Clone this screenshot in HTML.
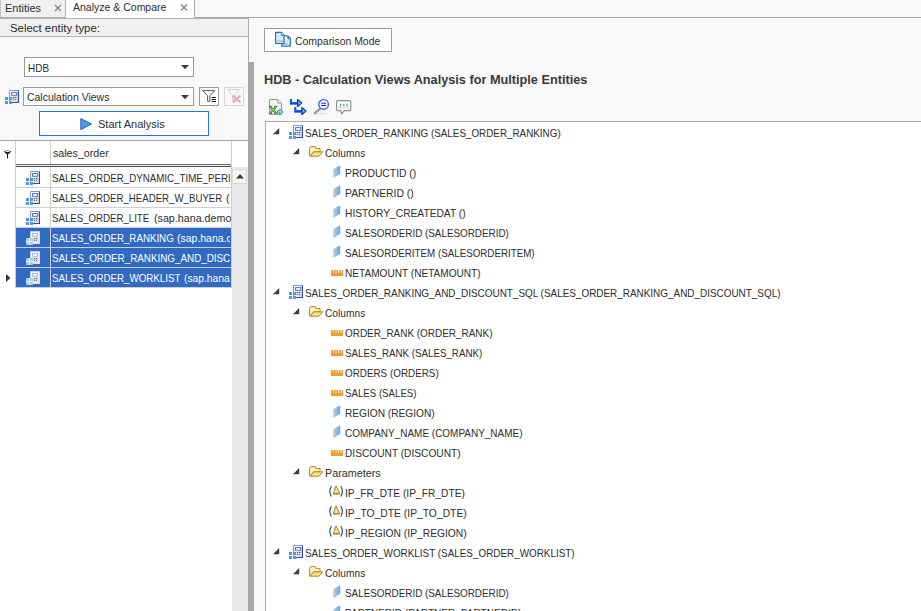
<!DOCTYPE html>
<html>
<head>
<meta charset="utf-8">
<title>Analyze &amp; Compare</title>
<style>
html,body{margin:0;padding:0;}
body{width:921px;height:611px;overflow:hidden;background:#f8f8f8;font-family:"Liberation Sans","DejaVu Sans",sans-serif;font-size:11px;color:#2d2d2d;position:relative;}
.abs{position:absolute;}
.t{position:absolute;white-space:nowrap;transform-origin:0 0;}
.clip{position:absolute;overflow:hidden;}
.combo{background:#fff;border:1px solid #999;box-sizing:border-box;}
.btn{background:#fff;border:1px solid #9a9a9a;box-sizing:border-box;}
.hl{position:absolute;height:1px;}
.vl{position:absolute;width:1px;}
</style>
</head>
<body>

<div class="abs" style="left:0;top:0;width:921px;height:17px;background:#f8f8f8;"></div>
<div class="abs" style="left:0;top:0;width:65px;height:17px;background:#f0f0f0;"></div>
<div class="vl" style="left:0;top:0;height:17px;background:#c4c4c4;"></div>
<div class="vl" style="left:65px;top:0;height:17px;background:#b4b4b4;"></div>
<div class="abs" style="left:66px;top:0;width:128px;height:18px;background:#fff;"></div>
<div class="vl" style="left:194px;top:0;height:18px;background:#b0b0b0;"></div>
<div class="hl" style="left:0;top:17px;width:66px;background:#ababab;"></div>
<div class="hl" style="left:195px;top:17px;width:726px;background:#ababab;"></div>
<svg class="abs" style="left:54px;top:4px" width="8" height="8" viewBox="0 0 8 8"><path transform="translate(0.5,0.5)" d="M0.5 0.5L6.5 6.5M6.5 0.5L0.5 6.5" stroke="#7a7a7a" stroke-width="1.1" fill="none"/></svg>
<svg class="abs" style="left:180px;top:4px" width="8" height="8" viewBox="0 0 8 8"><path transform="translate(0.5,0)" d="M0.5 0.5L6.5 6.5M6.5 0.5L0.5 6.5" stroke="#7a7a7a" stroke-width="1.1" fill="none"/></svg>
<div class="abs" style="left:0;top:18px;width:248px;height:593px;background:#f8f8f8;"></div>
<div class="abs" style="left:0;top:18px;width:248px;height:18px;background:#f0f0f0;"></div>
<div class="hl" style="left:0;top:18px;width:248px;background:#b2b2b2;"></div>
<div class="hl" style="left:0;top:36px;width:248px;background:#b4b4b4;"></div>
<div class="vl" style="left:248px;top:18px;height:44px;background:#ababab;"></div>
<div class="abs" style="left:248px;top:62px;width:6px;height:549px;background:#a8a8a8;"></div>
<div class="abs combo" style="left:24px;top:57px;width:170px;height:20px;"></div>
<svg class="abs" style="left:181px;top:65px" width="8" height="5" viewBox="0 0 8 5"><path d="M0 0H8L4 4.2Z" fill="#3a3a3a"/></svg>
<div class="abs combo" style="left:23px;top:87px;width:171px;height:19px;"></div>
<svg class="abs" style="left:181px;top:95px" width="8" height="5" viewBox="0 0 8 5"><path d="M0 0H8L4 4.2Z" fill="#3a3a3a"/></svg>
<svg class="abs" style="left:5px;top:90px" width="15" height="15" viewBox="0 0 15 15"><rect x="4.5" y="0.5" width="9" height="12" fill="#e3ecf9"/><rect x="5" y="1" width="8" height="5.5" fill="#fbfcff"/><path d="M4.5 13V0.5H13.5" fill="none" stroke="#7f98d2" stroke-width="1"/><path d="M13.4 0.4V12.5H5" fill="none" stroke="#2d4d9e" stroke-width="1.2"/><rect x="6.5" y="2.6" width="5.2" height="2.7" fill="#ffffff" stroke="#4f70c2" stroke-width="1"/><rect x="7.8" y="6.8" width="1.4" height="1.4" fill="#1fa038"/><rect x="9.9" y="6.8" width="1.4" height="1.4" fill="#e02020"/><rect x="7.8" y="8.9" width="1.3" height="1.3" fill="#777c86"/><rect x="9.9" y="8.9" width="1.3" height="1.3" fill="#777c86"/><path d="M7 8.4L8 9.2M9.4 10.4L10 11M9.2 8.4L9.8 9M11.4 8.4L12.2 9.2M12 10.2L11.4 10.8" stroke="#c9c4bb" stroke-width="0.7"/><rect x="0" y="7" width="3" height="3" fill="#4f9ad8"/><rect x="4" y="7" width="3" height="3" fill="#4f9ad8"/><rect x="0" y="11" width="3" height="3" fill="#4f9ad8"/><rect x="4" y="11" width="3" height="3" fill="#4f9ad8"/></svg>
<div class="abs btn" style="left:199px;top:87px;width:20px;height:19px;"></div>
<svg class="abs" style="left:202px;top:90px" width="15" height="13" viewBox="0 0 15 13"><path d="M0.6 0.6H12.6L7.8 5.8V11.4H5.6V5.8Z" fill="#fff" stroke="#444" stroke-width="0.9"/><path d="M9.5 7.5H14M9.5 9.5H14M9.5 11.5H14" stroke="#222" stroke-width="1"/></svg>
<div class="abs btn" style="left:224px;top:87px;width:20px;height:19px;border-color:#d6d6d6;background:#f9f9f9;"></div>
<svg class="abs" style="left:227px;top:89px" width="15" height="15" viewBox="0 0 15 15"><path d="M0.6 0.6H12.6L7 6.4V11.4H5.6V6.4Z" fill="#fbfbfb" stroke="#d0d0d0" stroke-width="1"/><path d="M6 6.5L13.5 13.5M13.5 6.5L6 13.5" stroke="#eba3ab" stroke-width="2"/></svg>
<div class="abs" style="left:39px;top:111px;width:170px;height:25px;background:#fff;border:1px solid #1c78d4;box-sizing:border-box;"></div>
<svg class="abs" style="left:80px;top:118px" width="13" height="13" viewBox="0 0 13 13"><path d="M0.8 0.6L11.6 6L0.8 11.6Z" fill="#4a98ee" stroke="#1f66cc" stroke-width="1" stroke-linejoin="round"/></svg>
<div class="abs" style="left:0;top:140px;width:248px;height:471px;background:#fff;"></div>
<div class="hl" style="left:0;top:140px;width:248px;background:#a6a6a6;"></div>
<div class="abs" style="left:232px;top:167px;width:16px;height:444px;background:#e9e9e9;"></div>
<div class="abs" style="left:232px;top:169px;width:15px;height:15px;background:#f4f4f4;border:1px solid #d9d9d9;box-sizing:border-box;"></div>
<svg class="abs" style="left:236px;top:174px" width="8" height="5" viewBox="0 0 8 5"><path d="M0 4.4H8L4 0Z" fill="#3a3a3a"/></svg>
<div class="abs" style="left:16px;top:228px;width:215px;height:20px;background:#316ac5;"></div>
<div class="abs" style="left:16px;top:248px;width:215px;height:20px;background:#316ac5;"></div>
<div class="abs" style="left:16px;top:268px;width:215px;height:20px;background:#316ac5;"></div>
<div class="vl" style="left:15px;top:141px;height:147px;background:#cdcdcd;"></div>
<div class="vl" style="left:50px;top:141px;height:147px;background:#cdcdcd;"></div>
<div class="vl" style="left:231px;top:141px;height:147px;background:#cdcdcd;"></div>
<div class="hl" style="left:16px;top:187px;width:216px;background:#cfcfcf;"></div>
<div class="hl" style="left:16px;top:207px;width:216px;background:#cfcfcf;"></div>
<div class="hl" style="left:16px;top:227px;width:216px;background:#cfcfcf;"></div>
<div class="hl" style="left:16px;top:247px;width:216px;background:#cfcfcf;"></div>
<div class="hl" style="left:16px;top:267px;width:216px;background:#cfcfcf;"></div>
<div class="hl" style="left:16px;top:287px;width:216px;background:#cfcfcf;"></div>
<div class="hl" style="left:16px;top:164px;width:215px;background:#6a6a6a;"></div>
<div class="hl" style="left:16px;top:165px;width:215px;background:#f0f0f0;"></div>
<div class="hl" style="left:16px;top:166px;width:215px;background:#4a4a4a;"></div>
<svg class="abs" style="left:26px;top:171px" width="15" height="15" viewBox="0 0 15 15"><rect x="4.5" y="0.5" width="9" height="12" fill="#e3ecf9"/><rect x="5" y="1" width="8" height="5.5" fill="#fbfcff"/><path d="M4.5 13V0.5H13.5" fill="none" stroke="#7f98d2" stroke-width="1"/><path d="M13.4 0.4V12.5H5" fill="none" stroke="#2d4d9e" stroke-width="1.2"/><rect x="6.5" y="2.6" width="5.2" height="2.7" fill="#ffffff" stroke="#4f70c2" stroke-width="1"/><rect x="7.8" y="6.8" width="1.4" height="1.4" fill="#1fa038"/><rect x="9.9" y="6.8" width="1.4" height="1.4" fill="#e02020"/><rect x="7.8" y="8.9" width="1.3" height="1.3" fill="#777c86"/><rect x="9.9" y="8.9" width="1.3" height="1.3" fill="#777c86"/><path d="M7 8.4L8 9.2M9.4 10.4L10 11M9.2 8.4L9.8 9M11.4 8.4L12.2 9.2M12 10.2L11.4 10.8" stroke="#c9c4bb" stroke-width="0.7"/><rect x="0" y="7" width="3" height="3" fill="#4f9ad8"/><rect x="4" y="7" width="3" height="3" fill="#4f9ad8"/><rect x="0" y="11" width="3" height="3" fill="#4f9ad8"/><rect x="4" y="11" width="3" height="3" fill="#4f9ad8"/></svg>
<svg class="abs" style="left:26px;top:191px" width="15" height="15" viewBox="0 0 15 15"><rect x="4.5" y="0.5" width="9" height="12" fill="#e3ecf9"/><rect x="5" y="1" width="8" height="5.5" fill="#fbfcff"/><path d="M4.5 13V0.5H13.5" fill="none" stroke="#7f98d2" stroke-width="1"/><path d="M13.4 0.4V12.5H5" fill="none" stroke="#2d4d9e" stroke-width="1.2"/><rect x="6.5" y="2.6" width="5.2" height="2.7" fill="#ffffff" stroke="#4f70c2" stroke-width="1"/><rect x="7.8" y="6.8" width="1.4" height="1.4" fill="#1fa038"/><rect x="9.9" y="6.8" width="1.4" height="1.4" fill="#e02020"/><rect x="7.8" y="8.9" width="1.3" height="1.3" fill="#777c86"/><rect x="9.9" y="8.9" width="1.3" height="1.3" fill="#777c86"/><path d="M7 8.4L8 9.2M9.4 10.4L10 11M9.2 8.4L9.8 9M11.4 8.4L12.2 9.2M12 10.2L11.4 10.8" stroke="#c9c4bb" stroke-width="0.7"/><rect x="0" y="7" width="3" height="3" fill="#4f9ad8"/><rect x="4" y="7" width="3" height="3" fill="#4f9ad8"/><rect x="0" y="11" width="3" height="3" fill="#4f9ad8"/><rect x="4" y="11" width="3" height="3" fill="#4f9ad8"/></svg>
<svg class="abs" style="left:26px;top:211px" width="15" height="15" viewBox="0 0 15 15"><rect x="4.5" y="0.5" width="9" height="12" fill="#e3ecf9"/><rect x="5" y="1" width="8" height="5.5" fill="#fbfcff"/><path d="M4.5 13V0.5H13.5" fill="none" stroke="#7f98d2" stroke-width="1"/><path d="M13.4 0.4V12.5H5" fill="none" stroke="#2d4d9e" stroke-width="1.2"/><rect x="6.5" y="2.6" width="5.2" height="2.7" fill="#ffffff" stroke="#4f70c2" stroke-width="1"/><rect x="7.8" y="6.8" width="1.4" height="1.4" fill="#1fa038"/><rect x="9.9" y="6.8" width="1.4" height="1.4" fill="#e02020"/><rect x="7.8" y="8.9" width="1.3" height="1.3" fill="#777c86"/><rect x="9.9" y="8.9" width="1.3" height="1.3" fill="#777c86"/><path d="M7 8.4L8 9.2M9.4 10.4L10 11M9.2 8.4L9.8 9M11.4 8.4L12.2 9.2M12 10.2L11.4 10.8" stroke="#c9c4bb" stroke-width="0.7"/><rect x="0" y="7" width="3" height="3" fill="#4f9ad8"/><rect x="4" y="7" width="3" height="3" fill="#4f9ad8"/><rect x="0" y="11" width="3" height="3" fill="#4f9ad8"/><rect x="4" y="11" width="3" height="3" fill="#4f9ad8"/></svg>
<svg class="abs" style="left:26px;top:231px" width="15" height="15" viewBox="0 0 15 15"><rect x="4.5" y="0.5" width="9" height="12" fill="#edf3fc"/><rect x="5" y="1" width="8" height="5.5" fill="#fbfcff"/><path d="M4.5 13V0.5H13.5" fill="none" stroke="#c3d3f0" stroke-width="1"/><path d="M13.4 0.4V12.5H5" fill="none" stroke="#d9e4f7" stroke-width="1.2"/><rect x="6.5" y="2.6" width="5.2" height="2.7" fill="#ffffff" stroke="#9db8ea" stroke-width="1"/><rect x="7.8" y="6.8" width="1.4" height="1.4" fill="#1fa038"/><rect x="9.9" y="6.8" width="1.4" height="1.4" fill="#e02020"/><rect x="7.8" y="8.9" width="1.3" height="1.3" fill="#777c86"/><rect x="9.9" y="8.9" width="1.3" height="1.3" fill="#777c86"/><path d="M7 8.4L8 9.2M9.4 10.4L10 11M9.2 8.4L9.8 9M11.4 8.4L12.2 9.2M12 10.2L11.4 10.8" stroke="#c9c4bb" stroke-width="0.7"/><rect x="0" y="7" width="7" height="7" fill="#9ccbec"/><rect x="3" y="7" width="1" height="7" fill="#fff"/><rect x="0" y="10" width="7" height="1" fill="#fff"/></svg>
<svg class="abs" style="left:26px;top:251px" width="15" height="15" viewBox="0 0 15 15"><rect x="4.5" y="0.5" width="9" height="12" fill="#edf3fc"/><rect x="5" y="1" width="8" height="5.5" fill="#fbfcff"/><path d="M4.5 13V0.5H13.5" fill="none" stroke="#c3d3f0" stroke-width="1"/><path d="M13.4 0.4V12.5H5" fill="none" stroke="#d9e4f7" stroke-width="1.2"/><rect x="6.5" y="2.6" width="5.2" height="2.7" fill="#ffffff" stroke="#9db8ea" stroke-width="1"/><rect x="7.8" y="6.8" width="1.4" height="1.4" fill="#1fa038"/><rect x="9.9" y="6.8" width="1.4" height="1.4" fill="#e02020"/><rect x="7.8" y="8.9" width="1.3" height="1.3" fill="#777c86"/><rect x="9.9" y="8.9" width="1.3" height="1.3" fill="#777c86"/><path d="M7 8.4L8 9.2M9.4 10.4L10 11M9.2 8.4L9.8 9M11.4 8.4L12.2 9.2M12 10.2L11.4 10.8" stroke="#c9c4bb" stroke-width="0.7"/><rect x="0" y="7" width="7" height="7" fill="#9ccbec"/><rect x="3" y="7" width="1" height="7" fill="#fff"/><rect x="0" y="10" width="7" height="1" fill="#fff"/></svg>
<svg class="abs" style="left:26px;top:271px" width="15" height="15" viewBox="0 0 15 15"><rect x="4.5" y="0.5" width="9" height="12" fill="#edf3fc"/><rect x="5" y="1" width="8" height="5.5" fill="#fbfcff"/><path d="M4.5 13V0.5H13.5" fill="none" stroke="#c3d3f0" stroke-width="1"/><path d="M13.4 0.4V12.5H5" fill="none" stroke="#d9e4f7" stroke-width="1.2"/><rect x="6.5" y="2.6" width="5.2" height="2.7" fill="#ffffff" stroke="#9db8ea" stroke-width="1"/><rect x="7.8" y="6.8" width="1.4" height="1.4" fill="#1fa038"/><rect x="9.9" y="6.8" width="1.4" height="1.4" fill="#e02020"/><rect x="7.8" y="8.9" width="1.3" height="1.3" fill="#777c86"/><rect x="9.9" y="8.9" width="1.3" height="1.3" fill="#777c86"/><path d="M7 8.4L8 9.2M9.4 10.4L10 11M9.2 8.4L9.8 9M11.4 8.4L12.2 9.2M12 10.2L11.4 10.8" stroke="#c9c4bb" stroke-width="0.7"/><rect x="0" y="7" width="7" height="7" fill="#9ccbec"/><rect x="3" y="7" width="1" height="7" fill="#fff"/><rect x="0" y="10" width="7" height="1" fill="#fff"/></svg>
<svg class="abs" style="left:3px;top:150px" width="9" height="9" viewBox="0 0 9 9"><path d="M0.6 1.6Q4.5 -0.6 8.4 1.6L5 4.6V8.6H4V4.6Z" fill="#1e1e1e"/><ellipse cx="4.5" cy="1.5" rx="2.6" ry="0.5" fill="#fff"/></svg>
<svg class="abs" style="left:6px;top:274px" width="5" height="8" viewBox="0 0 5 8"><path d="M0 0L4.4 4L0 8Z" fill="#333"/></svg>
<div class="abs btn" style="left:264px;top:28px;width:128px;height:24px;"></div>
<svg class="abs" style="left:274px;top:31px" width="18" height="17" viewBox="0 0 18 17"><path d="M7.8 4.9H13.8L16.2 7.3V15.2H7.8Z" fill="#fff" stroke="#1c76b6" stroke-width="1.3" stroke-linejoin="round"/><rect x="11.4" y="7.6" width="3.2" height="6.4" fill="#d3e8f4"/><rect x="9" y="12" width="5.6" height="2" fill="#a9d2e9"/><path d="M13.2 6.2L15 8" stroke="#1c76b6" stroke-width="1.2"/><path d="M1.6 1.5H7.6L10 3.9V12.3H1.6Z" fill="#fff" stroke="#1c76b6" stroke-width="1.3" stroke-linejoin="round"/><rect x="3" y="3.2" width="5.6" height="7.8" fill="#d6eaf5"/><rect x="3" y="9" width="5.6" height="2" fill="#a6d0e8"/><rect x="6.4" y="2.6" width="2.8" height="2.8" fill="#fff"/><path d="M6.8 3.2L8.8 5" stroke="#1c76b6" stroke-width="1.2"/></svg>
<svg class="abs" style="left:268px;top:98px" width="17" height="18" viewBox="0 0 17 18"><g transform="translate(0.5,0.5)"><path d="M1 1H9.4L13 4.6V16H1Z" fill="#f1f1f1" stroke="#999" stroke-width="1"/><path d="M9.4 1V4.6H13" fill="#fbfbfb" stroke="#999" stroke-width="1"/><path d="M1.6 8.2L7.6 14.6M7.6 8.2L1.6 14.6" stroke="#2f8a1c" stroke-width="2"/><path d="M1.6 8.2L7.6 14.6M7.6 8.2L1.6 14.6" stroke="#9be07c" stroke-width="0.8"/><path d="M0.4 7.9H3.6M5.6 7.9H8.8M0.4 14.8H3.6M5.6 14.8H8.8" stroke="#2f8a1c" stroke-width="1"/><path d="M9 12.2H11.2V10.7L14.5 13.3L11.2 16V14.4H9Z" fill="#8ae8f4" stroke="#1c8db4" stroke-width="0.9" stroke-linejoin="round"/></g></svg>
<svg class="abs" style="left:289px;top:98px" width="19" height="18" viewBox="0 0 19 18"><path d="M2 0.9V5H9.5" fill="none" stroke="#1258ee" stroke-width="2.1"/><path d="M0.9 6.2H9.5" fill="none" stroke="#0a27b8" stroke-width="0.8"/><path d="M8.6 1.6L12.6 5L8.6 8.4Z" fill="#6fd0ff" stroke="#0b3bd4" stroke-width="1.3" stroke-linejoin="round"/><path d="M6.3 8.9V13H13.8" fill="none" stroke="#1258ee" stroke-width="2.1"/><path d="M5.2 14.2H13.8" fill="none" stroke="#0a27b8" stroke-width="0.8"/><path d="M12.9 9.6L16.9 13L12.9 16.4Z" fill="#6fd0ff" stroke="#0b3bd4" stroke-width="1.3" stroke-linejoin="round"/></svg>
<svg class="abs" style="left:313px;top:98px" width="17" height="17" viewBox="0 0 17 17"><ellipse cx="8.5" cy="15.6" rx="6.5" ry="0.8" fill="#e4e4e4"/><path d="M6.8 10.8L2 15.2" stroke="#8f8f8f" stroke-width="2.3" stroke-linecap="round"/><path d="M6.4 11.2L2.4 14.8" stroke="#d8d8d8" stroke-width="0.8" stroke-dasharray="1 1"/><circle cx="10.6" cy="6.4" r="4.8" fill="#f4f6ff" stroke="#4766e4" stroke-width="1.4"/><path d="M8.2 5.3H13M8.2 7.5H13" stroke="#1b2fb0" stroke-width="1.1"/></svg>
<svg class="abs" style="left:336px;top:100px" width="16" height="15" viewBox="0 0 16 15"><path d="M1.4 0.6H13.8Q14.8 0.6 14.8 1.6V9.6Q14.8 10.6 13.8 10.6H8.2L5.6 13.8L4.8 10.6H1.4Q0.6 10.6 0.6 9.6V1.6Q0.6 0.6 1.4 0.6Z" fill="#fdfdfd" stroke="#8c8c8c" stroke-width="1.1" stroke-linejoin="round"/><rect x="2.4" y="6" width="10.6" height="2.6" fill="#e6e6e6"/><rect x="4" y="3.8" width="1.3" height="2.3" fill="#3aa6c8"/><rect x="7.2" y="3.8" width="1.3" height="2.3" fill="#3aa6c8"/><rect x="10.3" y="3.8" width="1.3" height="2.3" fill="#3aa6c8"/></svg>
<div class="abs" style="left:265px;top:121px;width:700px;height:500px;background:#fff;border:1px solid #acacac;box-sizing:border-box;"></div>
<svg class="abs" style="left:273px;top:128px" width="7" height="7" viewBox="0 0 7 7"><path d="M6.2 0V6.2H0Z" fill="#3a3a3a"/></svg>
<svg class="abs" style="left:289px;top:125px" width="15" height="15" viewBox="0 0 15 15"><rect x="4.5" y="0.5" width="9" height="12" fill="#e3ecf9"/><rect x="5" y="1" width="8" height="5.5" fill="#fbfcff"/><path d="M4.5 13V0.5H13.5" fill="none" stroke="#7f98d2" stroke-width="1"/><path d="M13.4 0.4V12.5H5" fill="none" stroke="#2d4d9e" stroke-width="1.2"/><rect x="6.5" y="2.6" width="5.2" height="2.7" fill="#ffffff" stroke="#4f70c2" stroke-width="1"/><rect x="7.8" y="6.8" width="1.4" height="1.4" fill="#1fa038"/><rect x="9.9" y="6.8" width="1.4" height="1.4" fill="#e02020"/><rect x="7.8" y="8.9" width="1.3" height="1.3" fill="#777c86"/><rect x="9.9" y="8.9" width="1.3" height="1.3" fill="#777c86"/><path d="M7 8.4L8 9.2M9.4 10.4L10 11M9.2 8.4L9.8 9M11.4 8.4L12.2 9.2M12 10.2L11.4 10.8" stroke="#c9c4bb" stroke-width="0.7"/><rect x="0" y="7" width="3" height="3" fill="#4f9ad8"/><rect x="4" y="7" width="3" height="3" fill="#4f9ad8"/><rect x="0" y="11" width="3" height="3" fill="#4f9ad8"/><rect x="4" y="11" width="3" height="3" fill="#4f9ad8"/></svg>
<svg class="abs" style="left:293px;top:148px" width="7" height="7" viewBox="0 0 7 7"><path d="M6.2 0V6.2H0Z" fill="#3a3a3a"/></svg>
<svg class="abs" style="left:308px;top:145px" width="16" height="12" viewBox="0 0 16 12"><path d="M1.6 10.8V3.4L3 1.4H7L7.8 3.4H12V6.8H5.8L2 11Z" fill="#fff1bd" stroke="#c4831f" stroke-width="1" stroke-linejoin="round"/><path d="M5.8 6.8H14.8L11 11.2H2Z" fill="#fbdd8c" stroke="#c4831f" stroke-width="1" stroke-linejoin="round"/></svg>
<svg class="abs" style="left:333px;top:165px" width="8" height="14" viewBox="0 0 8 14"><linearGradient id="ag333_165" x1="0" x2="1" y1="0" y2="0"><stop offset="0" stop-color="#b4d4f0"/><stop offset="1" stop-color="#6ba3d6"/></linearGradient><path d="M0.2 4.3L7.2 0.2V8.8L0.2 13.2Z" fill="url(#ag333_165)"/></svg>
<svg class="abs" style="left:333px;top:185px" width="8" height="14" viewBox="0 0 8 14"><linearGradient id="ag333_185" x1="0" x2="1" y1="0" y2="0"><stop offset="0" stop-color="#b4d4f0"/><stop offset="1" stop-color="#6ba3d6"/></linearGradient><path d="M0.2 4.3L7.2 0.2V8.8L0.2 13.2Z" fill="url(#ag333_185)"/></svg>
<svg class="abs" style="left:333px;top:205px" width="8" height="14" viewBox="0 0 8 14"><linearGradient id="ag333_205" x1="0" x2="1" y1="0" y2="0"><stop offset="0" stop-color="#b4d4f0"/><stop offset="1" stop-color="#6ba3d6"/></linearGradient><path d="M0.2 4.3L7.2 0.2V8.8L0.2 13.2Z" fill="url(#ag333_205)"/></svg>
<svg class="abs" style="left:333px;top:225px" width="8" height="14" viewBox="0 0 8 14"><linearGradient id="ag333_225" x1="0" x2="1" y1="0" y2="0"><stop offset="0" stop-color="#b4d4f0"/><stop offset="1" stop-color="#6ba3d6"/></linearGradient><path d="M0.2 4.3L7.2 0.2V8.8L0.2 13.2Z" fill="url(#ag333_225)"/></svg>
<svg class="abs" style="left:333px;top:245px" width="8" height="14" viewBox="0 0 8 14"><linearGradient id="ag333_245" x1="0" x2="1" y1="0" y2="0"><stop offset="0" stop-color="#b4d4f0"/><stop offset="1" stop-color="#6ba3d6"/></linearGradient><path d="M0.2 4.3L7.2 0.2V8.8L0.2 13.2Z" fill="url(#ag333_245)"/></svg>
<svg class="abs" style="left:331px;top:270px" width="12" height="6" viewBox="0 0 12 6"><rect x="0" y="0" width="12" height="6" rx="0.6" fill="#f59a23"/><rect x="2" y="0" width="1" height="3" fill="#ffedd2"/><rect x="4.5" y="0" width="1" height="3" fill="#ffedd2"/><rect x="7" y="0" width="1" height="3" fill="#ffedd2"/><rect x="9.5" y="0" width="1" height="3" fill="#ffedd2"/></svg>
<svg class="abs" style="left:273px;top:288px" width="7" height="7" viewBox="0 0 7 7"><path d="M6.2 0V6.2H0Z" fill="#3a3a3a"/></svg>
<svg class="abs" style="left:289px;top:285px" width="15" height="15" viewBox="0 0 15 15"><rect x="4.5" y="0.5" width="9" height="12" fill="#e3ecf9"/><rect x="5" y="1" width="8" height="5.5" fill="#fbfcff"/><path d="M4.5 13V0.5H13.5" fill="none" stroke="#7f98d2" stroke-width="1"/><path d="M13.4 0.4V12.5H5" fill="none" stroke="#2d4d9e" stroke-width="1.2"/><rect x="6.5" y="2.6" width="5.2" height="2.7" fill="#ffffff" stroke="#4f70c2" stroke-width="1"/><rect x="7.8" y="6.8" width="1.4" height="1.4" fill="#1fa038"/><rect x="9.9" y="6.8" width="1.4" height="1.4" fill="#e02020"/><rect x="7.8" y="8.9" width="1.3" height="1.3" fill="#777c86"/><rect x="9.9" y="8.9" width="1.3" height="1.3" fill="#777c86"/><path d="M7 8.4L8 9.2M9.4 10.4L10 11M9.2 8.4L9.8 9M11.4 8.4L12.2 9.2M12 10.2L11.4 10.8" stroke="#c9c4bb" stroke-width="0.7"/><rect x="0" y="7" width="3" height="3" fill="#4f9ad8"/><rect x="4" y="7" width="3" height="3" fill="#4f9ad8"/><rect x="0" y="11" width="3" height="3" fill="#4f9ad8"/><rect x="4" y="11" width="3" height="3" fill="#4f9ad8"/></svg>
<svg class="abs" style="left:293px;top:308px" width="7" height="7" viewBox="0 0 7 7"><path d="M6.2 0V6.2H0Z" fill="#3a3a3a"/></svg>
<svg class="abs" style="left:308px;top:305px" width="16" height="12" viewBox="0 0 16 12"><path d="M1.6 10.8V3.4L3 1.4H7L7.8 3.4H12V6.8H5.8L2 11Z" fill="#fff1bd" stroke="#c4831f" stroke-width="1" stroke-linejoin="round"/><path d="M5.8 6.8H14.8L11 11.2H2Z" fill="#fbdd8c" stroke="#c4831f" stroke-width="1" stroke-linejoin="round"/></svg>
<svg class="abs" style="left:331px;top:330px" width="12" height="6" viewBox="0 0 12 6"><rect x="0" y="0" width="12" height="6" rx="0.6" fill="#f59a23"/><rect x="2" y="0" width="1" height="3" fill="#ffedd2"/><rect x="4.5" y="0" width="1" height="3" fill="#ffedd2"/><rect x="7" y="0" width="1" height="3" fill="#ffedd2"/><rect x="9.5" y="0" width="1" height="3" fill="#ffedd2"/></svg>
<svg class="abs" style="left:331px;top:350px" width="12" height="6" viewBox="0 0 12 6"><rect x="0" y="0" width="12" height="6" rx="0.6" fill="#f59a23"/><rect x="2" y="0" width="1" height="3" fill="#ffedd2"/><rect x="4.5" y="0" width="1" height="3" fill="#ffedd2"/><rect x="7" y="0" width="1" height="3" fill="#ffedd2"/><rect x="9.5" y="0" width="1" height="3" fill="#ffedd2"/></svg>
<svg class="abs" style="left:331px;top:370px" width="12" height="6" viewBox="0 0 12 6"><rect x="0" y="0" width="12" height="6" rx="0.6" fill="#f59a23"/><rect x="2" y="0" width="1" height="3" fill="#ffedd2"/><rect x="4.5" y="0" width="1" height="3" fill="#ffedd2"/><rect x="7" y="0" width="1" height="3" fill="#ffedd2"/><rect x="9.5" y="0" width="1" height="3" fill="#ffedd2"/></svg>
<svg class="abs" style="left:331px;top:390px" width="12" height="6" viewBox="0 0 12 6"><rect x="0" y="0" width="12" height="6" rx="0.6" fill="#f59a23"/><rect x="2" y="0" width="1" height="3" fill="#ffedd2"/><rect x="4.5" y="0" width="1" height="3" fill="#ffedd2"/><rect x="7" y="0" width="1" height="3" fill="#ffedd2"/><rect x="9.5" y="0" width="1" height="3" fill="#ffedd2"/></svg>
<svg class="abs" style="left:333px;top:405px" width="8" height="14" viewBox="0 0 8 14"><linearGradient id="ag333_405" x1="0" x2="1" y1="0" y2="0"><stop offset="0" stop-color="#b4d4f0"/><stop offset="1" stop-color="#6ba3d6"/></linearGradient><path d="M0.2 4.3L7.2 0.2V8.8L0.2 13.2Z" fill="url(#ag333_405)"/></svg>
<svg class="abs" style="left:333px;top:425px" width="8" height="14" viewBox="0 0 8 14"><linearGradient id="ag333_425" x1="0" x2="1" y1="0" y2="0"><stop offset="0" stop-color="#b4d4f0"/><stop offset="1" stop-color="#6ba3d6"/></linearGradient><path d="M0.2 4.3L7.2 0.2V8.8L0.2 13.2Z" fill="url(#ag333_425)"/></svg>
<svg class="abs" style="left:331px;top:450px" width="12" height="6" viewBox="0 0 12 6"><rect x="0" y="0" width="12" height="6" rx="0.6" fill="#f59a23"/><rect x="2" y="0" width="1" height="3" fill="#ffedd2"/><rect x="4.5" y="0" width="1" height="3" fill="#ffedd2"/><rect x="7" y="0" width="1" height="3" fill="#ffedd2"/><rect x="9.5" y="0" width="1" height="3" fill="#ffedd2"/></svg>
<svg class="abs" style="left:293px;top:468px" width="7" height="7" viewBox="0 0 7 7"><path d="M6.2 0V6.2H0Z" fill="#3a3a3a"/></svg>
<svg class="abs" style="left:308px;top:465px" width="16" height="12" viewBox="0 0 16 12"><path d="M1.6 10.8V3.4L3 1.4H7L7.8 3.4H12V6.8H5.8L2 11Z" fill="#fff1bd" stroke="#c4831f" stroke-width="1" stroke-linejoin="round"/><path d="M5.8 6.8H14.8L11 11.2H2Z" fill="#fbdd8c" stroke="#c4831f" stroke-width="1" stroke-linejoin="round"/></svg>
<svg class="abs" style="left:328px;top:485px" width="17" height="13" viewBox="0 0 17 13"><path d="M3.4 1.3Q0.3 6.3 3.4 11.5" fill="none" stroke="#27456e" stroke-width="1.15"/><path d="M12.8 1.3Q15.9 6.3 12.8 11.5" fill="none" stroke="#27456e" stroke-width="1.15"/><path d="M8 0.2L5.8 4.4" stroke="#d2d2d2" stroke-width="1.4" fill="none"/><path d="M8.3 0.9L11.7 8.7H5.1Z" fill="#f8d768" stroke="#b9801f" stroke-width="0.9" stroke-linejoin="round"/><path d="M8.3 3.4L9.9 7.4H6.9Z" fill="#fdeaa0"/><path d="M5 8.9H11.8" stroke="#a86f14" stroke-width="1"/></svg>
<svg class="abs" style="left:328px;top:505px" width="17" height="13" viewBox="0 0 17 13"><path d="M3.4 1.3Q0.3 6.3 3.4 11.5" fill="none" stroke="#27456e" stroke-width="1.15"/><path d="M12.8 1.3Q15.9 6.3 12.8 11.5" fill="none" stroke="#27456e" stroke-width="1.15"/><path d="M8 0.2L5.8 4.4" stroke="#d2d2d2" stroke-width="1.4" fill="none"/><path d="M8.3 0.9L11.7 8.7H5.1Z" fill="#f8d768" stroke="#b9801f" stroke-width="0.9" stroke-linejoin="round"/><path d="M8.3 3.4L9.9 7.4H6.9Z" fill="#fdeaa0"/><path d="M5 8.9H11.8" stroke="#a86f14" stroke-width="1"/></svg>
<svg class="abs" style="left:328px;top:525px" width="17" height="13" viewBox="0 0 17 13"><path d="M3.4 1.3Q0.3 6.3 3.4 11.5" fill="none" stroke="#27456e" stroke-width="1.15"/><path d="M12.8 1.3Q15.9 6.3 12.8 11.5" fill="none" stroke="#27456e" stroke-width="1.15"/><path d="M8 0.2L5.8 4.4" stroke="#d2d2d2" stroke-width="1.4" fill="none"/><path d="M8.3 0.9L11.7 8.7H5.1Z" fill="#f8d768" stroke="#b9801f" stroke-width="0.9" stroke-linejoin="round"/><path d="M8.3 3.4L9.9 7.4H6.9Z" fill="#fdeaa0"/><path d="M5 8.9H11.8" stroke="#a86f14" stroke-width="1"/></svg>
<svg class="abs" style="left:273px;top:548px" width="7" height="7" viewBox="0 0 7 7"><path d="M6.2 0V6.2H0Z" fill="#3a3a3a"/></svg>
<svg class="abs" style="left:289px;top:545px" width="15" height="15" viewBox="0 0 15 15"><rect x="4.5" y="0.5" width="9" height="12" fill="#e3ecf9"/><rect x="5" y="1" width="8" height="5.5" fill="#fbfcff"/><path d="M4.5 13V0.5H13.5" fill="none" stroke="#7f98d2" stroke-width="1"/><path d="M13.4 0.4V12.5H5" fill="none" stroke="#2d4d9e" stroke-width="1.2"/><rect x="6.5" y="2.6" width="5.2" height="2.7" fill="#ffffff" stroke="#4f70c2" stroke-width="1"/><rect x="7.8" y="6.8" width="1.4" height="1.4" fill="#1fa038"/><rect x="9.9" y="6.8" width="1.4" height="1.4" fill="#e02020"/><rect x="7.8" y="8.9" width="1.3" height="1.3" fill="#777c86"/><rect x="9.9" y="8.9" width="1.3" height="1.3" fill="#777c86"/><path d="M7 8.4L8 9.2M9.4 10.4L10 11M9.2 8.4L9.8 9M11.4 8.4L12.2 9.2M12 10.2L11.4 10.8" stroke="#c9c4bb" stroke-width="0.7"/><rect x="0" y="7" width="3" height="3" fill="#4f9ad8"/><rect x="4" y="7" width="3" height="3" fill="#4f9ad8"/><rect x="0" y="11" width="3" height="3" fill="#4f9ad8"/><rect x="4" y="11" width="3" height="3" fill="#4f9ad8"/></svg>
<svg class="abs" style="left:293px;top:568px" width="7" height="7" viewBox="0 0 7 7"><path d="M6.2 0V6.2H0Z" fill="#3a3a3a"/></svg>
<svg class="abs" style="left:308px;top:565px" width="16" height="12" viewBox="0 0 16 12"><path d="M1.6 10.8V3.4L3 1.4H7L7.8 3.4H12V6.8H5.8L2 11Z" fill="#fff1bd" stroke="#c4831f" stroke-width="1" stroke-linejoin="round"/><path d="M5.8 6.8H14.8L11 11.2H2Z" fill="#fbdd8c" stroke="#c4831f" stroke-width="1" stroke-linejoin="round"/></svg>
<svg class="abs" style="left:333px;top:585px" width="8" height="14" viewBox="0 0 8 14"><linearGradient id="ag333_585" x1="0" x2="1" y1="0" y2="0"><stop offset="0" stop-color="#b4d4f0"/><stop offset="1" stop-color="#6ba3d6"/></linearGradient><path d="M0.2 4.3L7.2 0.2V8.8L0.2 13.2Z" fill="url(#ag333_585)"/></svg>
<svg class="abs" style="left:333px;top:605px" width="8" height="14" viewBox="0 0 8 14"><linearGradient id="ag333_605" x1="0" x2="1" y1="0" y2="0"><stop offset="0" stop-color="#b4d4f0"/><stop offset="1" stop-color="#6ba3d6"/></linearGradient><path d="M0.2 4.3L7.2 0.2V8.8L0.2 13.2Z" fill="url(#ag333_605)"/></svg>
<div class="t" style="left:5.15px;top:-0.31px;line-height:16px;transform:scaleX(0.9974);">Entities</div>
<div class="t" style="left:72.80px;top:-0.81px;line-height:16px;transform:scaleX(0.9547);">Analyze &amp; Compare</div>
<div class="t" style="left:9.76px;top:19.79px;line-height:16px;transform:scaleX(1.0361);">Select entity type:</div>
<div class="t" style="left:27.86px;top:59.69px;line-height:16px;transform:scaleX(0.9065);">HDB</div>
<div class="t" style="left:26.87px;top:89.19px;line-height:16px;transform:scaleX(0.9510);">Calculation Views</div>
<div class="t" style="left:97.89px;top:116.19px;line-height:16px;transform:scaleX(1.0020);">Start Analysis</div>
<div class="t" style="left:52.86px;top:144.89px;line-height:16px;transform:scaleX(0.9689);">sales_order</div>
<div class="t" style="left:295.28px;top:33.19px;line-height:16px;transform:scaleX(0.9485);">Comparison Mode</div>
<div class="t" style="left:264.23px;top:72.27px;line-height:16px;transform:scaleX(1.0164);font-size:12.5px;font-weight:bold;color:#3a3a3a;">HDB - Calculation Views Analysis for Multiple Entities</div>
<div class="t" style="left:304.97px;top:125.19px;line-height:16px;transform:scaleX(0.8956);">SALES_ORDER_RANKING (SALES_ORDER_RANKING)</div>
<div class="t" style="left:325.14px;top:145.19px;line-height:16px;transform:scaleX(0.9269);">Columns</div>
<div class="t" style="left:344.66px;top:165.19px;line-height:16px;transform:scaleX(0.9402);">PRODUCTID ()</div>
<div class="t" style="left:344.77px;top:185.19px;line-height:16px;transform:scaleX(0.9410);">PARTNERID ()</div>
<div class="t" style="left:344.77px;top:205.19px;line-height:16px;transform:scaleX(0.9294);">HISTORY_CREATEDAT ()</div>
<div class="t" style="left:344.92px;top:225.19px;line-height:16px;transform:scaleX(0.8963);">SALESORDERID (SALESORDERID)</div>
<div class="t" style="left:344.88px;top:245.19px;line-height:16px;transform:scaleX(0.8889);">SALESORDERITEM (SALESORDERITEM)</div>
<div class="t" style="left:344.78px;top:265.19px;line-height:16px;transform:scaleX(0.9172);">NETAMOUNT (NETAMOUNT)</div>
<div class="t" style="left:305.49px;top:285.19px;line-height:16px;transform:scaleX(0.9020);">SALES_ORDER_RANKING_AND_DISCOUNT_SQL (SALES_ORDER_RANKING_AND_DISCOUNT_SQL)</div>
<div class="t" style="left:325.14px;top:305.19px;line-height:16px;transform:scaleX(0.9269);">Columns</div>
<div class="t" style="left:345.09px;top:325.19px;line-height:16px;transform:scaleX(0.9035);">ORDER_RANK (ORDER_RANK)</div>
<div class="t" style="left:344.92px;top:345.19px;line-height:16px;transform:scaleX(0.8872);">SALES_RANK (SALES_RANK)</div>
<div class="t" style="left:345.15px;top:365.19px;line-height:16px;transform:scaleX(0.8965);">ORDERS (ORDERS)</div>
<div class="t" style="left:344.93px;top:385.19px;line-height:16px;transform:scaleX(0.8796);">SALES (SALES)</div>
<div class="t" style="left:344.78px;top:405.19px;line-height:16px;transform:scaleX(0.9226);">REGION (REGION)</div>
<div class="t" style="left:345.02px;top:425.19px;line-height:16px;transform:scaleX(0.9066);">COMPANY_NAME (COMPANY_NAME)</div>
<div class="t" style="left:344.78px;top:445.19px;line-height:16px;transform:scaleX(0.9243);">DISCOUNT (DISCOUNT)</div>
<div class="t" style="left:324.73px;top:465.19px;line-height:16px;transform:scaleX(0.9778);">Parameters</div>
<div class="t" style="left:344.70px;top:485.19px;line-height:16px;transform:scaleX(0.9294);">IP_FR_DTE (IP_FR_DTE)</div>
<div class="t" style="left:344.70px;top:505.19px;line-height:16px;transform:scaleX(0.9376);">IP_TO_DTE (IP_TO_DTE)</div>
<div class="t" style="left:344.70px;top:525.19px;line-height:16px;transform:scaleX(0.9347);">IP_REGION (IP_REGION)</div>
<div class="t" style="left:305.41px;top:545.19px;line-height:16px;transform:scaleX(0.8989);">SALES_ORDER_WORKLIST (SALES_ORDER_WORKLIST)</div>
<div class="t" style="left:325.14px;top:565.19px;line-height:16px;transform:scaleX(0.9269);">Columns</div>
<div class="t" style="left:344.92px;top:585.19px;line-height:16px;transform:scaleX(0.8963);">SALESORDERID (SALESORDERID)</div>
<div class="t" style="left:344.78px;top:605.19px;line-height:16px;transform:scaleX(0.9126);">PARTNERID (PARTNER_PARTNERID)</div>
<div class="clip" style="left:51.96px;top:170.19px;width:178.40px;height:16px;"><div class="t" style="left:0.00px;top:0.00px;line-height:16px;transform:scaleX(0.8837);">SALES_ORDER_DYNAMIC_TIME_PERIOD (sap.hana.democontent.epm.models)</div></div>
<div class="clip" style="left:51.89px;top:190.19px;width:178.40px;height:16px;"><div class="t" style="left:0.00px;top:0.00px;line-height:16px;transform:scaleX(0.8787);">SALES_ORDER_HEADER_W_BUYER</div></div>
<div class="clip" style="left:225.75px;top:190.19px;width:4.70px;height:16px;"><div class="t" style="left:0.00px;top:0.00px;line-height:16px;transform:scaleX(0.9729);">(sap.hana.democontent.epm.models)</div></div>
<div class="clip" style="left:51.93px;top:210.19px;width:178.40px;height:16px;"><div class="t" style="left:0.00px;top:0.00px;line-height:16px;transform:scaleX(0.8786);">SALES_ORDER_LITE</div></div>
<div class="clip" style="left:154.43px;top:210.19px;width:76.10px;height:16px;"><div class="t" style="left:0.00px;top:0.00px;line-height:16px;transform:scaleX(0.9729);">(sap.hana.democontent.epm.models)</div></div>
<div class="clip" style="left:51.93px;top:230.19px;width:178.40px;height:16px;"><div class="t" style="left:0.00px;top:0.00px;line-height:16px;transform:scaleX(0.8850);color:#fff;">SALES_ORDER_RANKING</div></div>
<div class="clip" style="left:177.45px;top:230.19px;width:52.90px;height:16px;"><div class="t" style="left:0.00px;top:0.00px;line-height:16px;transform:scaleX(0.9522);color:#fff;">(sap.hana.democontent.epm.models)</div></div>
<div class="clip" style="left:51.95px;top:250.19px;width:178.40px;height:16px;"><div class="t" style="left:0.00px;top:0.00px;line-height:16px;transform:scaleX(0.8942);color:#fff;">SALES_ORDER_RANKING_AND_DISCOUNT_SQL (sap.hana.democontent.epm.models)</div></div>
<div class="clip" style="left:51.92px;top:270.19px;width:178.40px;height:16px;"><div class="t" style="left:0.00px;top:0.00px;line-height:16px;transform:scaleX(0.8858);color:#fff;">SALES_ORDER_WORKLIST</div></div>
<div class="clip" style="left:184.23px;top:270.19px;width:46.00px;height:16px;"><div class="t" style="left:0.00px;top:0.00px;line-height:16px;transform:scaleX(0.9338);color:#fff;">(sap.hana.democontent.epm.models)</div></div>
</body>
</html>
